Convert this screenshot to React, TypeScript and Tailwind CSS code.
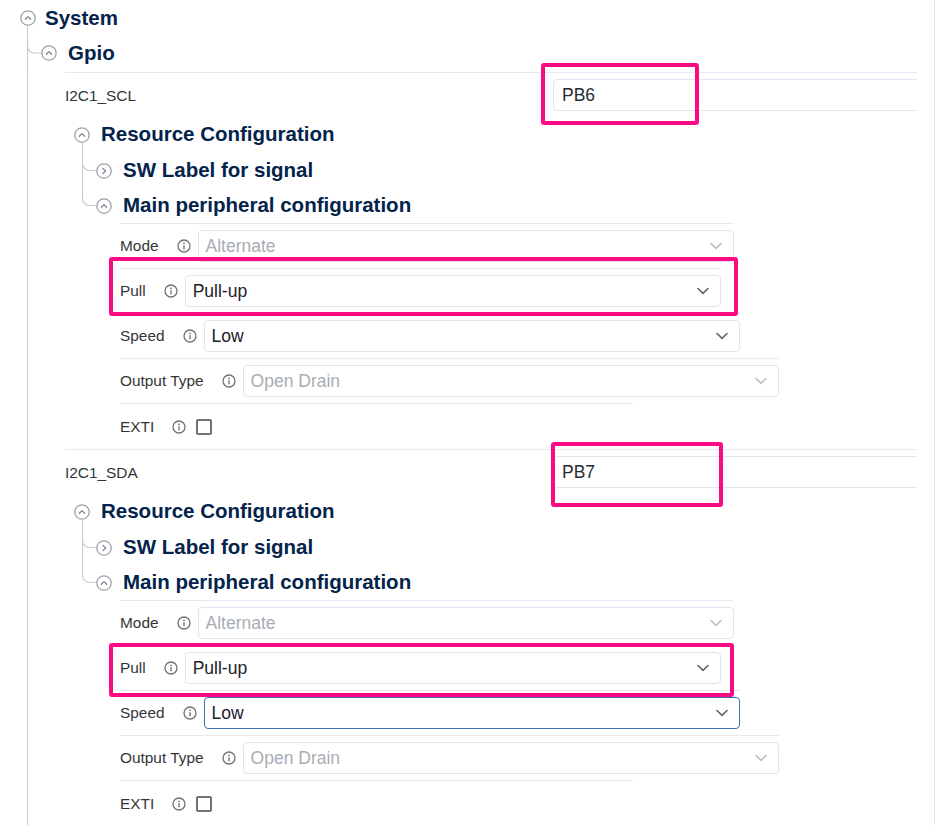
import React from "react";

const FONT = { fontFamily: '"Liberation Sans", Arial, sans-serif' };
const LINE = "#c6cbd4";

function TreeIcon({ dir = "up" }: { dir?: "up" | "right" }) {
  return (
    <svg width="16" height="16" viewBox="0 0 16 16" className="shrink-0">
      <circle cx="8" cy="8" r="7.2" fill="white" stroke="#9ca2ab" strokeWidth="1.3" />
      {dir === "up" ? (
        <path d="M5.4 9.2 L8 6.6 L10.6 9.2" fill="none" stroke="#7d848e" strokeWidth="1.3" strokeLinecap="round" strokeLinejoin="round" />
      ) : (
        <path d="M7 5.4 L9.6 8 L7 10.6" fill="none" stroke="#7d848e" strokeWidth="1.3" strokeLinecap="round" strokeLinejoin="round" />
      )}
    </svg>
  );
}

function Elbow({ h, cy, last, w = 14 }: { h: number; cy: number; last?: boolean; w?: number }) {
  const d = `M0.5 0 V${cy - 8} Q0.5 ${cy} 8.5 ${cy} H${w}` + (last ? "" : ` M0.5 0 V${h}`);
  return (
    <svg width={w} height={h} viewBox={`0 0 ${w} ${h}`} className="shrink-0">
      <path d={d} fill="none" stroke={LINE} strokeWidth="1.2" />
    </svg>
  );
}

function InfoIcon() {
  return (
    <svg width="14" height="14" viewBox="0 0 14 14" className="ml-[18px] shrink-0">
      <circle cx="7" cy="7" r="6" fill="none" stroke="#6d7178" strokeWidth="1.3" />
      <circle cx="7" cy="4.3" r="0.9" fill="#6d7178" />
      <path d="M7 6.3 V10.2" stroke="#6d7178" strokeWidth="1.4" />
    </svg>
  );
}

function Chevron({ disabled }: { disabled?: boolean }) {
  return (
    <svg width="12" height="8" viewBox="0 0 12 8" className="shrink-0">
      <path d="M1 1.5 L6 6.3 L11 1.5" fill="none" stroke={disabled ? "#b9bec6" : "#5d6470"} strokeWidth="1.6" strokeLinecap="round" strokeLinejoin="round" />
    </svg>
  );
}

function Select({ value, disabled, focused }: { value: string; disabled?: boolean; focused?: boolean }) {
  return (
    <div
      className={
        "ml-[7px] flex h-[32px] w-[536px] shrink-0 items-center justify-between rounded-[4px] border bg-white pl-[7px] pr-[11px] text-[17.5px] " +
        (focused ? "border-[#4270b9]" : "border-[#dfe4ee]") +
        (disabled ? " text-[#a8adb5]" : " text-[#1c2128]")
      }
    >
      <span className="pt-[2px] leading-none">{value}</span>
      <Chevron disabled={disabled} />
    </div>
  );
}

function FormRow({ label, children, w, h }: { label: string; children: React.ReactNode; w?: string; h?: string }) {
  return (
    <div className={"flex items-center border-t border-[#e7eaf2] " + (w ?? "w-fit") + " " + (h ?? "h-[45px]")}>
      <span className="text-[15.4px] leading-none text-[#333638]">{label}</span>
      <InfoIcon />
      {children}
    </div>
  );
}

function Header({ text, dir = "up" }: { text: string; dir?: "up" | "right" }) {
  return (
    <>
      <TreeIcon dir={dir} />
      <span className="ml-[11px] text-[20.5px] font-bold leading-none text-[#03234b]">{text}</span>
    </>
  );
}

function Signal({ name, pin, speedFocused }: { name: string; pin: string; speedFocused?: boolean }) {
  return (
    <div>
      <div className="flex h-[45px] items-center border-t border-[#e7eaf2]">
        <span className="w-[488px] shrink-0 pt-[1px] text-[15.4px] leading-none text-[#333638]">{name}</span>
        <div className="flex h-[32px] w-[420px] shrink-0 items-center rounded-[4px] border border-[#dfe4ee] pl-[8px] pt-[2px] text-[17.5px] leading-none text-[#262b33]">
          {pin}
        </div>
      </div>
      {/* Resource Configuration */}
      <div className="flex h-[26px] items-center pl-[9px] pt-[9px]">
        <Header text="Resource Configuration" />
      </div>
      <div className="ml-[17px]">
        <div className="flex h-[45px] items-center pt-[10px]">
          <div className="-mt-[10px] self-start">
            <Elbow h={45} cy={27.5} />
          </div>
          <Header text="SW Label for signal" dir="right" />
        </div>
        <div className="flex h-[35px] items-center">
          <div className="self-start">
            <Elbow h={35} cy={17.5} last />
          </div>
          <Header text="Main peripheral configuration" />
        </div>
      </div>
      <div className="ml-[55px]">
        <FormRow label="Mode">
          <Select value="Alternate" disabled />
        </FormRow>
        <FormRow label="Pull">
          <Select value="Pull-up" />
        </FormRow>
        <FormRow label="Speed">
          <Select value="Low" focused={speedFocused} />
        </FormRow>
        <FormRow label="Output Type">
          <Select value="Open Drain" disabled />
        </FormRow>
        <FormRow label="EXTI" w="w-[513px]" h="h-[46px]">
          <div className="ml-[10px] h-[16px] w-[16px] shrink-0 rounded-[2px] border-2 border-[#6f7277] bg-white" />
        </FormRow>
      </div>
    </div>
  );
}

function Mark({ cls }: { cls: string }) {
  return <div className={"pointer-events-none absolute rounded-[3px] border-[4px] border-[#fb0a83] " + cls} />;
}

export default function App() {
  return (
    <div className="relative h-[825px] w-[936px] overflow-hidden bg-white" style={FONT}>
      <div className="h-[825px] w-[935px] border-r border-[#e3e7f1]">
        <div className="w-[917px] overflow-hidden">
          <div className="flex h-[26px] items-center pl-[20px] pt-[10px]">
            <TreeIcon />
            <span className="ml-[9px] text-[20.5px] font-bold leading-none text-[#03234b]">System</span>
          </div>
          <div className="ml-[27px] min-h-[800px] border-l border-[#c6cbd4]">
            <div className="flex h-[44px] items-center pt-[10px]">
              <div className="-ml-px">
                <Elbow h={34} cy={17} />
              </div>
              <Header text="Gpio" />
            </div>
            <div className="ml-[37px] mt-[2px]">
              <Signal name="I2C1_SCL" pin="PB6" />
              <Signal name="I2C1_SDA" pin="PB7" speedFocused />
            </div>
          </div>
        </div>
      </div>
      <Mark cls="left-[541px] top-[63px] h-[62px] w-[158px]" />
      <Mark cls="left-[109px] top-[257px] h-[59px] w-[629px]" />
      <Mark cls="left-[551px] top-[442px] h-[65px] w-[172px]" />
      <Mark cls="left-[109px] top-[643px] h-[54px] w-[625px]" />
    </div>
  );
}
